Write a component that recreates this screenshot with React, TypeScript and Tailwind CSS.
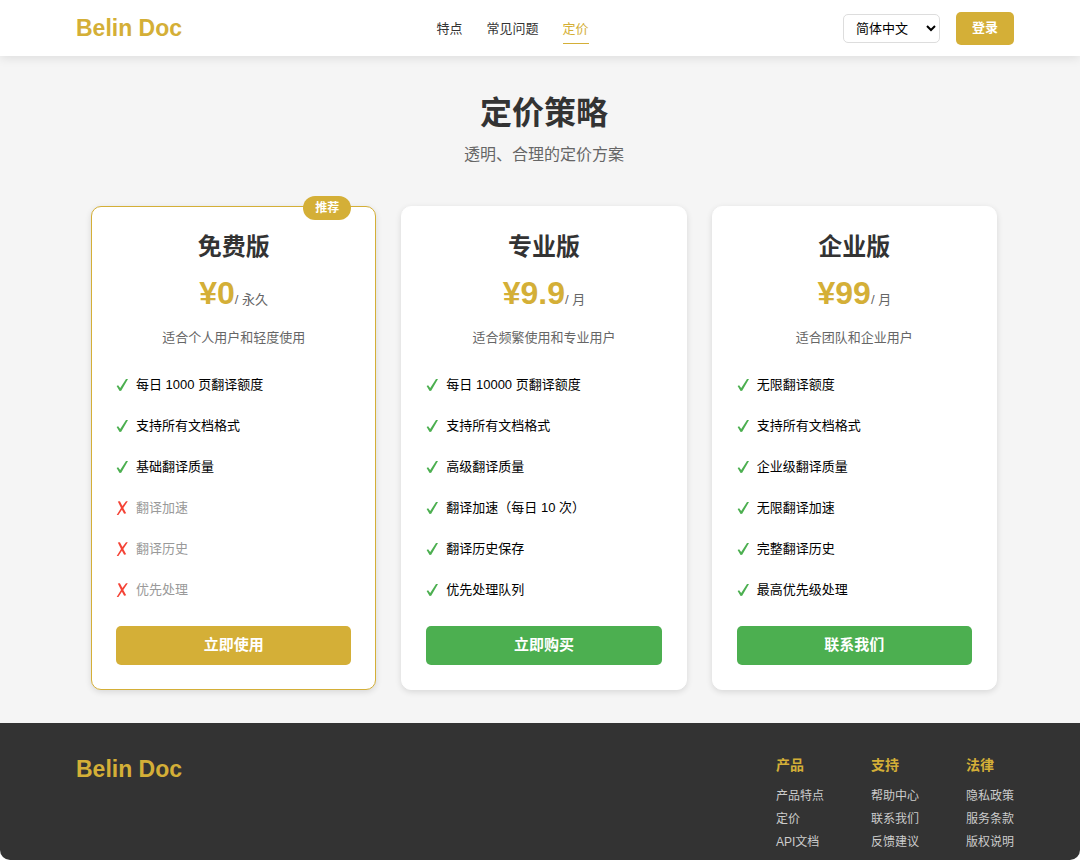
import React, { useState } from "react";
import { clsx } from "clsx";

type Feature = { label: string; included: boolean };

type Plan = {
  name: string;
  price: string;
  period: string;
  description: string;
  features: Feature[];
  action: string;
  recommended?: boolean;
};

const yes = (label: string): Feature => ({ label, included: true });
const no = (label: string): Feature => ({ label, included: false });

const plans: Plan[] = [
  {
    name: "免费版",
    price: "¥0",
    period: "/ 永久",
    description: "适合个人用户和轻度使用",
    features: [
      yes("每日 1000 页翻译额度"),
      yes("支持所有文档格式"),
      yes("基础翻译质量"),
      no("翻译加速"),
      no("翻译历史"),
      no("优先处理"),
    ],
    action: "立即使用",
    recommended: true,
  },
  {
    name: "专业版",
    price: "¥9.9",
    period: "/ 月",
    description: "适合频繁使用和专业用户",
    features: [
      yes("每日 10000 页翻译额度"),
      yes("支持所有文档格式"),
      yes("高级翻译质量"),
      yes("翻译加速（每日 10 次）"),
      yes("翻译历史保存"),
      yes("优先处理队列"),
    ],
    action: "立即购买",
  },
  {
    name: "企业版",
    price: "¥99",
    period: "/ 月",
    description: "适合团队和企业用户",
    features: [
      yes("无限翻译额度"),
      yes("支持所有文档格式"),
      yes("企业级翻译质量"),
      yes("无限翻译加速"),
      yes("完整翻译历史"),
      yes("最高优先级处理"),
    ],
    action: "联系我们",
  },
];

const navItems = [
  { label: "特点", href: "#features" },
  { label: "常见问题", href: "#faq" },
  { label: "定价", href: "#pricing", active: true },
];

const footerGroups = [
  { title: "产品", links: ["产品特点", "定价", "API文档"] },
  { title: "支持", links: ["帮助中心", "联系我们", "反馈建议"] },
  { title: "法律", links: ["隐私政策", "服务条款", "版权说明"] },
];

function CheckMark() {
  return (
    <svg viewBox="0 0 12 14" className="h-[14px] w-3 shrink-0 fill-[#4caf50]" aria-hidden="true">
      <path d="M0.6 8.1 L2.1 7.2 L4.2 10 L10 1.1 L12 0.9 L5.2 12.7 L3.6 12.9 Z" />
    </svg>
  );
}

function CrossMark() {
  return (
    <svg viewBox="0 0 12 16" className="h-4 w-3 shrink-0 fill-[#f44336]" aria-hidden="true">
      <path d="M1.8 1.4 L3.9 1.2 L6.4 6.1 L10 1.2 L11.8 1.2 L7.3 8 L10.2 13.3 L8.1 13.7 L5.9 9.8 L2.4 15 L0.7 15 L5 8.1 Z" />
    </svg>
  );
}

function Header() {
  const [lang, setLang] = useState("zh");
  return (
    <header className="relative bg-white pl-[76px] pr-[66px] shadow-[0_2px_10px_rgba(0,0,0,0.1)]">
      <div className="flex h-14 items-center justify-between">
        <a href="#" className="text-[23px] leading-7 font-bold text-[#d4af37]">Belin Doc</a>
        <nav className="flex gap-6 pt-[2px]">
          {navItems.map((item) => (
            <a
              key={item.label}
              href={item.href}
              className={clsx(
                "border-b py-1 text-[13px] leading-5",
                item.active ? "border-[#d4af37] text-[#d4af37]" : "border-transparent text-[#333333]"
              )}
            >
              {item.label}
            </a>
          ))}
        </nav>
        <div className="flex items-center justify-end gap-4">
          <select
            aria-label="语言"
            value={lang}
            onChange={(e) => setLang(e.target.value)}
            className="h-[29px] w-[97px] rounded-[5px] border border-[#dddddd] bg-white pl-2 text-[13px] text-black"
          >
            <option value="zh">简体中文</option>
            <option value="en">English</option>
          </select>
          <button type="button" className="h-[33px] rounded-[5px] bg-[#d4af37] px-4 text-[13px] font-bold text-white">
            登录
          </button>
        </div>
      </div>
    </header>
  );
}

function PlanCard({ plan }: { plan: Plan }) {
  return (
    <article
      className={clsx(
        "relative flex flex-col rounded-[10px] border bg-white p-6 shadow-[0_2px_6px_rgba(0,0,0,0.12)]",
        plan.recommended ? "border-[#d4af37]" : "border-white"
      )}
    >
      {plan.recommended && (
        <span className="absolute -top-[11px] right-6 rounded-full bg-[#d4af37] px-3 text-[12px] leading-6 font-bold text-white">
          推荐
        </span>
      )}
      <h2 className="text-center text-2xl leading-8 font-bold text-[#333333]">{plan.name}</h2>
      <p className="mt-3 flex h-9 items-baseline justify-center text-[32px] leading-9 font-bold text-[#d4af37]">
        {plan.price}
        <span className="text-[13px] leading-5 font-normal text-[#666666]">{plan.period}</span>
      </p>
      <p className="mt-4 text-center text-[13px] leading-[21px] text-[#666666]">{plan.description}</p>
      <ul className="mt-4">
        {plan.features.map((f) => (
          <li
            key={f.label}
            className={clsx("flex h-[41px] items-center gap-2 text-[13px]", f.included ? "text-black" : "text-[#999999]")}
          >
            {f.included ? <CheckMark /> : <CrossMark />}
            {f.label}
          </li>
        ))}
      </ul>
      <button
        type="button"
        className={clsx(
          "mt-4 h-[39px] w-full rounded-[5px] text-[15px] font-bold text-white",
          plan.recommended ? "bg-[#d4af37]" : "bg-[#4caf50]"
        )}
      >
        {plan.action}
      </button>
    </article>
  );
}

function Footer() {
  return (
    <footer className="flex grow items-start justify-between rounded-b-[10px] bg-[#333333] pt-8 pr-[66px] pb-[6px] pl-[76px]">
      <a href="#" className="text-[23px] leading-7 font-bold text-[#d4af37]">Belin Doc</a>
      <div className="flex gap-[47px]">
        {footerGroups.map((group) => (
          <div key={group.title}>
            <h3 className="text-[14px] leading-5 font-bold text-[#d4af37]">{group.title}</h3>
            <ul className="mt-[10px]">
              {group.links.map((link) => (
                <li key={link} className="text-[12px] leading-[23px]">
                  <a href="#" className="text-[#cccccc]">{link}</a>
                </li>
              ))}
            </ul>
          </div>
        ))}
      </div>
    </footer>
  );
}

export default function App() {
  return (
    <div className="flex min-h-screen flex-col bg-white font-['Liberation_Sans','Noto_Sans_CJK_SC',sans-serif]">
      <Header />
      <main className="bg-[#f5f5f5] pt-[33px] pr-[83px] pb-[33px] pl-[91px]">
        <h1 className="text-center text-[32px] leading-[48px] font-bold text-[#333333]">定价策略</h1>
        <p className="mt-[6px] text-center text-[16px] leading-6 text-[#666666]">透明、合理的定价方案</p>
        <div className="mt-[39px] grid grid-cols-3 gap-[25px]">
          {plans.map((plan) => (
            <PlanCard key={plan.name} plan={plan} />
          ))}
        </div>
      </main>
      <Footer />
    </div>
  );
}
